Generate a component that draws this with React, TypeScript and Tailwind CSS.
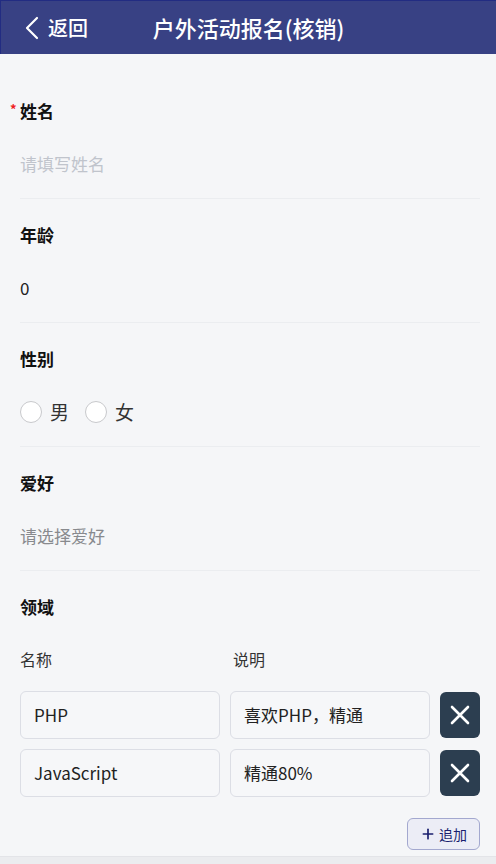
import { Plus } from "lucide-react";

const rows = [
  { name: "PHP", desc: "喜欢PHP，精通" },
  { name: "JavaScript", desc: "精通80%" },
];

const Field = ({
  label,
  required,
  children,
  last,
}: {
  label: string;
  required?: boolean;
  children: React.ReactNode;
  last?: boolean;
}) => (
  <div className={last ? "pt-[24px]" : "pt-[24px] pb-[22px] border-b border-[#ebedf0]"}>
    <div className="relative h-6 flex items-center text-[17px] font-bold text-[#111]">
      {required && <span className="absolute -left-[10px] top-0 text-[13px] text-[#f02020]">*</span>}
      {label}
    </div>
    <div className={(last ? "mt-[28px]" : "mt-[29px]") + " h-6 flex items-center text-[17px]"}>{children}</div>
  </div>
);

const Radio = ({ label }: { label: string }) => (
  <label className="flex items-center gap-2">
    <span className="w-[22px] h-[22px] rounded-full border border-[#c8c9cc] bg-white" />
    <span className="text-[19px] text-[#333]">{label}</span>
  </label>
);

const CloseIcon = () => (
  <svg width="20" height="20" viewBox="0 0 20 20" fill="none" stroke="white" strokeWidth="2.6" strokeLinecap="round">
    <path d="M2 2 L18 18 M18 2 L2 18" />
  </svg>
);

export default function App() {
  return (
    <div
      className="min-h-[864px] bg-[#f5f6f8] flex flex-col"
      style={{ fontFamily: '"Noto Sans CJK SC", "Noto Sans", sans-serif' }}
    >
      <header className="h-[54px] bg-[#384184] border-l border-t border-[#222c82] flex items-center pl-[24px] relative text-white">
        <div className="flex items-center gap-[9px]">
          <svg width="14" height="24" viewBox="0 0 14 24" fill="none" stroke="white" strokeWidth="2.2" strokeLinecap="round" strokeLinejoin="round">
            <path d="M12 2 L2 12 L12 22" />
          </svg>
          <span className="text-[20px] font-medium">返回</span>
        </div>
        <h1 className="absolute left-0 right-0 text-center text-[22px] font-medium pointer-events-none">
          户外活动报名(核销)
        </h1>
      </header>

      <main className="flex-1 pl-5 pr-4 pt-[21px]">
        <Field label="姓名" required>
          <span className="text-[#c0c4cc]">请填写姓名</span>
        </Field>
        <Field label="年龄">
          <span className="text-[#222]">0</span>
        </Field>
        <Field label="性别">
          <div className="flex items-center gap-4">
            <Radio label="男" />
            <Radio label="女" />
          </div>
        </Field>
        <Field label="爱好">
          <span className="text-[#888a8e]">请选择爱好</span>
        </Field>
        <Field label="领域" last>
          <div className="w-full grid grid-cols-[200px_200px_40px] gap-x-[10px] text-[16px] text-[#333]">
            <span>名称</span>
            <span className="pl-[3px]">说明</span>
          </div>
        </Field>

        <div className="mt-[20px] flex flex-col gap-[10px]">
          {rows.map((r) => (
            <div key={r.name} className="grid grid-cols-[200px_200px_40px] gap-x-[10px] items-center">
              <div className="h-[48px] rounded-[6px] border border-[#dcdee5] bg-[#f6f7f9] flex items-center px-[13px] text-[17px] text-[#222]">
                {r.name}
              </div>
              <div className="h-[48px] rounded-[6px] border border-[#dcdee5] bg-[#f6f7f9] flex items-center px-[13px] text-[17px] text-[#222]">
                {r.desc}
              </div>
              <button className="h-[46px] w-[40px] rounded-[6px] bg-[#2c3e50] flex items-center justify-center">
                <CloseIcon />
              </button>
            </div>
          ))}
        </div>

        <div className="flex justify-end mt-[21px] mb-[6px]">
          <button className="h-[32px] w-[73px] rounded-[6px] border border-[#a3a8cf] bg-[#ecedf6] flex items-center justify-center gap-[3px] text-[14px] text-[#1a1f6e]">
            <Plus className="w-4 h-4" strokeWidth={2.5} />
            追加
          </button>
        </div>
      </main>

      <div className="h-[8px] bg-[#ebecef] border-t border-[#e3e4e8]" />
    </div>
  );
}
